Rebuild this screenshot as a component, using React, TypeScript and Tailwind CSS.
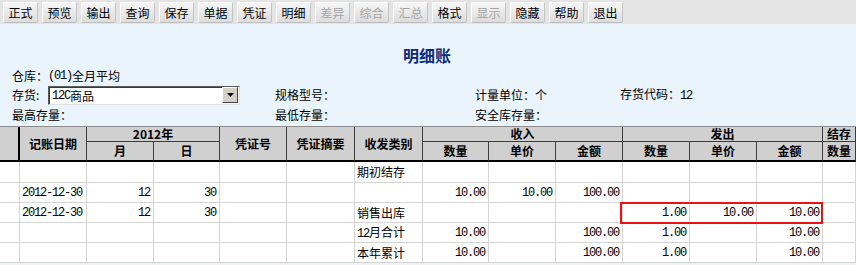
import React from "react";

const cjk = { fontFamily: '"Noto Sans CJK SC", "Liberation Sans", sans-serif' };
const mono = { fontFamily: '"Liberation Mono", "Noto Sans CJK SC", monospace' };

// [label, enabled]
const tools: [string, boolean][] = [
  ["正式", true],
  ["预览", true],
  ["输出", true],
  ["查询", true],
  ["保存", true],
  ["单据", true],
  ["凭证", true],
  ["明细", true],
  ["差异", false],
  ["综合", false],
  ["汇总", false],
  ["格式", true],
  ["显示", false],
  ["隐藏", true],
  ["帮助", true],
  ["退出", true],
];

const cols =
  "grid-cols-[20px_67px_67px_66px_67px_68px_68px_66px_67px_67px_67px_67px_66px_33px]";

const rows: string[][] = [
  ["", "", "", "", "", "期初结存", "", "", "", "", "", "", ""],
  ["2012-12-30", "12", "30", "", "", "", "10.00", "10.00", "100.00", "", "", "", ""],
  ["2012-12-30", "12", "30", "", "", "销售出库", "", "", "", "1.00", "10.00", "10.00", ""],
  ["", "", "", "", "", "12月合计", "10.00", "", "100.00", "1.00", "", "10.00", ""],
  ["", "", "", "", "", "本年累计", "10.00", "", "100.00", "1.00", "", "10.00", ""],
];

function Num({ children }: { children: React.ReactNode }) {
  return (
    <span style={mono} className="text-[12px] tracking-[-1.2px]">
      {children}
    </span>
  );
}

function ToolButton({ label, enabled }: { label: string; enabled: boolean }) {
  return (
    <div
      className={
        "flex h-[21px] w-[35px] items-center justify-center rounded-[2px] border-t border-l border-t-white border-l-white border-r border-b border-r-[#c4c4c4] border-b-[#bdbdbd] bg-gradient-to-b from-[#f6f6f6] to-[#dcdcdc] text-[12px] " +
        (enabled ? "text-black" : "text-[#a3a3a3]")
      }
    >
      {label}
    </div>
  );
}

function HeadCell({ className = "", children }: { className?: string; children?: React.ReactNode }) {
  return (
    <div
      className={
        "flex items-center justify-center border-r border-b border-[#3c3c3c] text-[12px] font-bold leading-none " +
        className
      }
    >
      {children}
    </div>
  );
}

export default function App() {
  return (
    <div className="h-[265px] w-[856px] overflow-hidden bg-[#eaf4fd] text-black" style={cjk}>
      {/* Toolbar */}
      <div className="flex h-[24px] gap-[4px] bg-[#e4e4e4] pt-[2px] pl-[3px]">
        {tools.map(([label, enabled]) => (
          <ToolButton key={label} label={label} enabled={enabled} />
        ))}
      </div>

      {/* Title */}
      <div className="pt-[21px] pl-[403px]">
        <div className="h-[20px] text-[16px] leading-[20px] font-bold text-[#0b2b7a]">明细账</div>
      </div>

      {/* Info rows */}
      <div className="mt-[2px] pl-[12px] text-[12px]">
        <div className="flex h-[18px] items-center">
          仓库：<Num>(01)</Num>全月平均
        </div>
        <div className="grid h-[19px] grid-cols-[263px_200px_145px_1fr] items-center">
          <div className="flex items-center">
            <span className="w-[36px]">存货:</span>
            <div className="flex h-[19px] w-[192px] items-center border border-[#5a5a5a] border-r-[#e0e0e0] border-b-[#e0e0e0] bg-white">
              <div className="flex h-[17px] flex-1 items-center border-t border-l border-[#3a3a3a] pl-[2px]">
                <Num>12C</Num>商品
              </div>
              <div className="mr-[1px] flex h-[16px] w-[16px] items-center justify-center border border-t-white border-l-white border-r-[#404040] border-b-[#404040] bg-[#d4d0c8]">
                <svg width="7" height="4" viewBox="0 0 7 4">
                  <path d="M0 0h7L3.5 4z" fill="#000" />
                </svg>
              </div>
            </div>
          </div>
          <div>规格型号：</div>
          <div>计量单位：个</div>
          <div>
            存货代码：<Num>12</Num>
          </div>
        </div>
        <div className="grid h-[22px] grid-cols-[263px_200px_145px_1fr] items-center">
          <div>最高存量：</div>
          <div>最低存量：</div>
          <div>安全库存量：</div>
          <div />
        </div>
      </div>

      {/* Table header */}
      <div className={"grid grid-rows-[15px_20px] border-t border-[#8c8c8c] bg-[#d0d0d0] " + cols}>
        <div className="row-span-2 border-r-2 border-b-2 border-black" />
        <HeadCell className="row-span-2 border-b-2 border-b-black">记账日期</HeadCell>
        <HeadCell className="col-span-2">2012年</HeadCell>
        <HeadCell className="row-span-2 border-b-2 border-b-black">凭证号</HeadCell>
        <HeadCell className="row-span-2 border-b-2 border-b-black">凭证摘要</HeadCell>
        <HeadCell className="row-span-2 border-b-2 border-b-black">收发类别</HeadCell>
        <HeadCell className="col-span-3">收入</HeadCell>
        <HeadCell className="col-span-3">发出</HeadCell>
        <HeadCell>结存</HeadCell>
        {["月", "日", "数量", "单价", "金额", "数量", "单价", "金额", "数量"].map((t, i) => (
          <HeadCell key={i} className="border-b-2 border-b-black">
            {t}
          </HeadCell>
        ))}
      </div>

      {/* Table body */}
      <div className="relative">
        <div className={"grid grid-rows-[21px_20px_20px_20px_20px] bg-white " + cols}>
          {rows.map((r, ri) => (
            <React.Fragment key={ri}>
              <div className="border-r border-b border-[#d4d4d4]" />
              {r.map((v, ci) => {
                const left = ci === 0 || ci === 5;
                return (
                  <div
                    key={ci}
                    className={
                      "flex items-center border-r border-b border-[#d4d4d4] " +
                      (left ? "justify-start pl-[2px]" : "justify-end pr-[3px]")
                    }
                  >
                    {ci === 5 ? (
                      <span className="text-[12px]">
                        {v.startsWith("12") ? (
                          <>
                            <Num>12</Num>
                            {v.slice(2)}
                          </>
                        ) : (
                          v
                        )}
                      </span>
                    ) : (
                      <Num>{v}</Num>
                    )}
                  </div>
                );
              })}
            </React.Fragment>
          ))}
        </div>
        {/* highlighted cells */}
        <div className="absolute top-[40px] left-[620px] h-[22px] w-[203px] border-2 border-[#ee1111]" />
      </div>
    </div>
  );
}
